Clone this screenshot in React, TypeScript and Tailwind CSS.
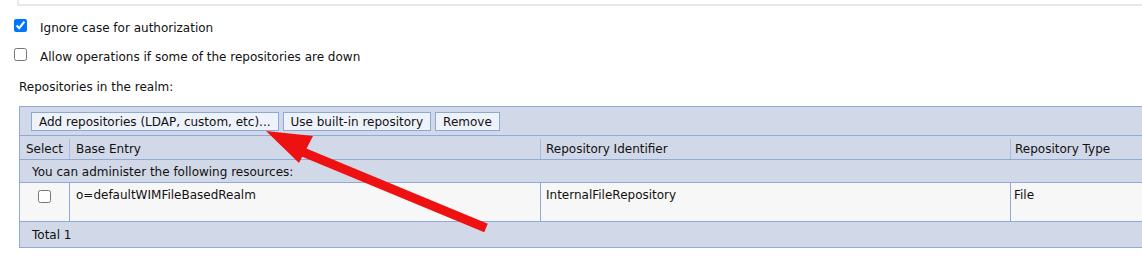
const LINE = 'border-[#8fa9d9]';

function Btn({ label }: { label: string }) {
  return (
    <button
      type="button"
      className="h-[19px] border border-[#8ea8d4] bg-[#edf2fb] px-[7px] pt-[1px] text-[12px] leading-[16px] text-[#111]"
    >
      {label}
    </button>
  );
}

function Check({ checked }: { checked?: boolean }) {
  return (
    <input
      type="checkbox"
      defaultChecked={checked}
      className="m-0 h-[13px] w-[13px] shrink-0"
    />
  );
}

export default function App() {
  return (
    <div
      className="relative h-[262px] w-[1142px] overflow-hidden bg-white text-[12px] text-[#111]"
      style={{ fontFamily: '"DejaVu Sans", Verdana, sans-serif' }}
    >
      <div className="ml-[17px] h-[6px] border-b-2 border-l-2 border-[#e8e8e8]" />

      <div className="mt-[9px] flex h-[21px] items-center pl-[14px]">
        <Check checked />
        <span className="ml-[13px] pt-[4px]">Ignore case for authorization</span>
      </div>
      <div className="mt-[8px] flex h-[21px] items-center pl-[14px]">
        <Check />
        <span className="ml-[13px] pt-[4px]">Allow operations if some of the repositories are down</span>
      </div>

      <div className="mt-[14px] pl-[19px] leading-[16px]">Repositories in the realm:</div>

      <div className={`ml-[19px] mt-[11px] w-[1200px] border-b border-l border-t ${LINE}`}>
        <div className={`flex h-[29px] items-start gap-[4px] border-b ${LINE} bg-[#d1d8e7] pl-[11px] pt-[5px]`}>
          <Btn label="Add repositories (LDAP, custom, etc)..." />
          <Btn label="Use built-in repository" />
          <Btn label="Remove" />
        </div>

        <div className={`flex h-[24px] border-b ${LINE} bg-[#d1d8e7] pt-[3px] leading-[20px]`}>
          <div className="w-[49px] px-[6px]">Select</div>
          <div className="w-[471px] border-l border-[#a9bce0] px-[6px]">Base Entry</div>
          <div className="w-[470px] border-l border-[#a9bce0] px-[5px]">Repository Identifier</div>
          <div className="flex-1 border-l border-[#a9bce0] px-[4px]">Repository Type</div>
        </div>

        <div className={`h-[23px] border-b ${LINE} bg-[#d1d8e7] pl-[12px] pt-[2px] leading-[20px]`}>
          You can administer the following resources:
        </div>

        <div className={`flex h-[39px] border-b ${LINE} bg-[#f7f7f7] leading-[16px]`}>
          <div className="flex w-[49px] justify-center pt-[7px]">
            <Check />
          </div>
          <div className={`w-[471px] border-l ${LINE} px-[6px] pt-[4px]`}>o=defaultWIMFileBasedRealm</div>
          <div className={`w-[470px] border-l ${LINE} px-[5px] pt-[4px]`}>InternalFileRepository</div>
          <div className={`flex-1 border-l ${LINE} px-[3px] pt-[4px]`}>File</div>
        </div>

        <div className="h-[25px] bg-[#d1d8e7] pl-[12px] pt-[2px] leading-[22px]">Total 1</div>
      </div>

      <svg
        className="pointer-events-none absolute left-0 top-0"
        width="1142"
        height="262"
        viewBox="0 0 1142 262"
      >
        <line x1="298" y1="150" x2="486" y2="228" stroke="#ee1111" strokeWidth="9" />
        <polygon points="266,131 299,163 313,136" fill="#ee1111" />
      </svg>
    </div>
  );
}
